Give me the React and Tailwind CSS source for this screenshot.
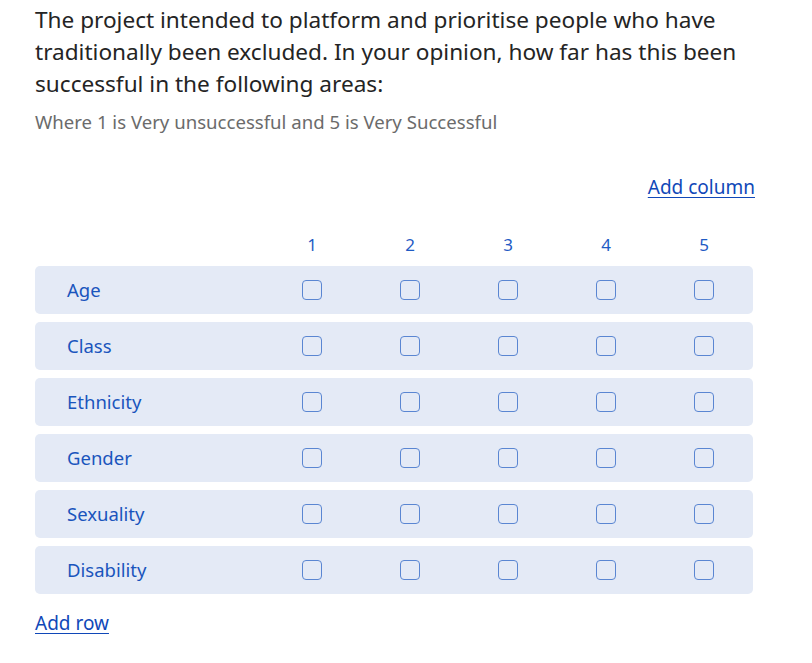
import React from "react";

const rows = ["Age", "Class", "Ethnicity", "Gender", "Sexuality", "Disability"];
const cols = [1, 2, 3, 4, 5];

function Box() {
  return <div className="w-[20px] h-[20px] rounded-[4px] border-[1.5px] border-[#5a86d2] bg-transparent" />;
}

export default function App() {
  return (
    <div className="w-[812px] h-[663px] bg-white pl-[35px] pt-[4px] font-['Noto_Sans',sans-serif]">
      <div className="w-[718px]">
        <h1 className="text-[22.6px] leading-[32px] text-[#242424] font-normal">
          The project intended to platform and prioritise people who have traditionally been excluded. In your opinion, how far has this been successful in the following areas:
        </h1>
        <p className="mt-[10px] text-[18.6px] leading-[24px] text-[#6b6b6b]">
          Where 1 is Very unsuccessful and 5 is Very Successful
        </p>
        <div className="mt-[41px] flex justify-end">
          <a href="#" className="text-[19px] leading-[24px] text-[#1048b8] underline underline-offset-[3px] mr-[-2px]">
            Add column
          </a>
        </div>
        <div className="mt-[30px] flex h-[32px] items-center">
          <div className="w-[228px]" />
          {cols.map((c) => (
            <div key={c} className="w-[98px] text-center text-[17px] text-[#1f5bc4]">
              {c}
            </div>
          ))}
        </div>
        <div className="mt-[5px] flex flex-col gap-[8px]">
          {rows.map((r) => (
            <div key={r} className="flex h-[48px] items-center rounded-[5px] bg-[#e4eaf6]">
              <div className="w-[228px] pl-[32px] text-[18.5px] text-[#1a55bd]">{r}</div>
              {cols.map((c) => (
                <div key={c} className="w-[98px] flex justify-center">
                  <Box />
                </div>
              ))}
            </div>
          ))}
        </div>
        <div className="mt-[17px]">
          <a href="#" className="text-[19px] leading-[24px] text-[#1048b8] underline underline-offset-[3px]">
            Add row
          </a>
        </div>
      </div>
    </div>
  );
}
